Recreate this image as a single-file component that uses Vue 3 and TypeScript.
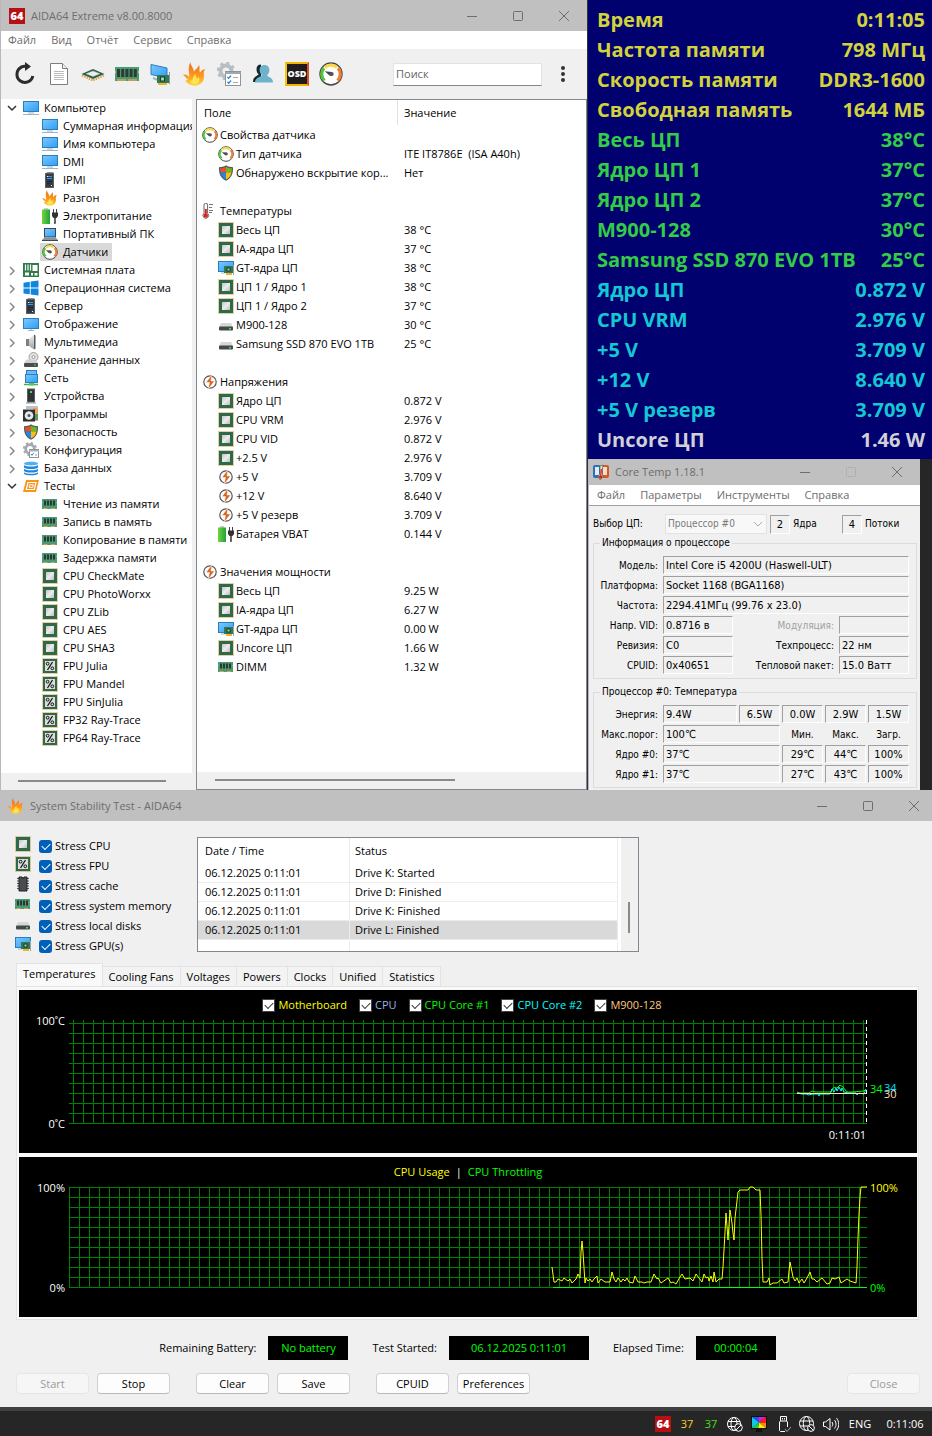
<script setup lang="ts">
import { ref } from 'vue'

interface TreeNode {
  label: string
  icon: string
  open?: boolean
  children?: { label: string; icon: string }[]
}

interface SensorRow {
  name: string
  icon?: string
  value?: string
  group?: boolean
}

const menu = ['Файл', 'Вид', 'Отчёт', 'Сервис', 'Справка']
const tools = [
  { id: 't-refresh', title: 'Обновить' },
  { id: 't-doc', title: 'Отчёт' },
  { id: 't-cpu', title: 'ЦП' },
  { id: 't-ram', title: 'Память' },
  { id: 't-gpu', title: 'Видео' },
  { id: 'i-flame', title: 'Стресс-тест' },
  { id: 't-config', title: 'Настройка' },
  { id: 't-users', title: 'Пользователи' },
  { id: '', title: 'OSD' },
  { id: 'i-gauge', title: 'Датчики' },
]

const tree = ref<TreeNode[]>([
  {
    label: 'Компьютер', icon: 'i-monitor', open: true,
    children: [
      { label: 'Суммарная информация', icon: 'i-monitor' },
      { label: 'Имя компьютера', icon: 'i-monitor' },
      { label: 'DMI', icon: 'i-monitor' },
      { label: 'IPMI', icon: 'i-server' },
      { label: 'Разгон', icon: 'i-flame' },
      { label: 'Электропитание', icon: 'i-battery' },
      { label: 'Портативный ПК', icon: 'i-laptop' },
      { label: 'Датчики', icon: 'i-gauge' },
    ],
  },
  { label: 'Системная плата', icon: 'i-board' },
  { label: 'Операционная система', icon: 'i-windows' },
  { label: 'Сервер', icon: 'i-server' },
  { label: 'Отображение', icon: 'i-display' },
  { label: 'Мультимедиа', icon: 'i-speaker' },
  { label: 'Хранение данных', icon: 'i-storage' },
  { label: 'Сеть', icon: 'i-network' },
  { label: 'Устройства', icon: 'i-device' },
  { label: 'Программы', icon: 'i-programs' },
  { label: 'Безопасность', icon: 'i-shield' },
  { label: 'Конфигурация', icon: 'i-config' },
  { label: 'База данных', icon: 'i-database' },
  {
    label: 'Тесты', icon: 'i-tests', open: true,
    children: [
      { label: 'Чтение из памяти', icon: 'i-ram' },
      { label: 'Запись в память', icon: 'i-ram' },
      { label: 'Копирование в памяти', icon: 'i-ram' },
      { label: 'Задержка памяти', icon: 'i-ram' },
      { label: 'CPU CheckMate', icon: 'i-cpu' },
      { label: 'CPU PhotoWorxx', icon: 'i-cpu' },
      { label: 'CPU ZLib', icon: 'i-cpu' },
      { label: 'CPU AES', icon: 'i-cpu' },
      { label: 'CPU SHA3', icon: 'i-cpu' },
      { label: 'FPU Julia', icon: 'i-fpu' },
      { label: 'FPU Mandel', icon: 'i-fpu' },
      { label: 'FPU SinJulia', icon: 'i-fpu' },
      { label: 'FP32 Ray-Trace', icon: 'i-fpu' },
      { label: 'FP64 Ray-Trace', icon: 'i-fpu' },
    ],
  },
])
const selected = ref('Датчики')
const search = ref('')

const sensors: SensorRow[] = [
  { name: 'Свойства датчика', icon: 'i-gauge', group: true },
  { name: 'Тип датчика', icon: 'i-gauge', value: 'ITE IT8786E\u00a0 (ISA A40h)' },
  { name: 'Обнаружено вскрытие кор...', icon: 'i-shield', value: 'Нет' },
  { name: '' },
  { name: 'Температуры', icon: 'i-thermo', group: true },
  { name: 'Весь ЦП', icon: 'i-cpu', value: '38 °C' },
  { name: 'IA-ядра ЦП', icon: 'i-cpu', value: '37 °C' },
  { name: 'GT-ядра ЦП', icon: 'i-gpu', value: '38 °C' },
  { name: 'ЦП 1 / Ядро 1', icon: 'i-cpu', value: '38 °C' },
  { name: 'ЦП 1 / Ядро 2', icon: 'i-cpu', value: '37 °C' },
  { name: 'M900-128', icon: 'i-disk', value: '30 °C' },
  { name: 'Samsung SSD 870 EVO 1TB', icon: 'i-disk', value: '25 °C' },
  { name: '' },
  { name: 'Напряжения', icon: 'i-bolt', group: true },
  { name: 'Ядро ЦП', icon: 'i-cpu', value: '0.872 V' },
  { name: 'CPU VRM', icon: 'i-cpu', value: '2.976 V' },
  { name: 'CPU VID', icon: 'i-cpu', value: '0.872 V' },
  { name: '+2.5 V', icon: 'i-cpu', value: '2.976 V' },
  { name: '+5 V', icon: 'i-bolt', value: '3.709 V' },
  { name: '+12 V', icon: 'i-bolt', value: '8.640 V' },
  { name: '+5 V резерв', icon: 'i-bolt', value: '3.709 V' },
  { name: 'Батарея VBAT', icon: 'i-battery', value: '0.144 V' },
  { name: '' },
  { name: 'Значения мощности', icon: 'i-bolt', group: true },
  { name: 'Весь ЦП', icon: 'i-cpu', value: '9.25 W' },
  { name: 'IA-ядра ЦП', icon: 'i-cpu', value: '6.27 W' },
  { name: 'GT-ядра ЦП', icon: 'i-gpu', value: '0.00 W' },
  { name: 'Uncore ЦП', icon: 'i-cpu', value: '1.66 W' },
  { name: 'DIMM', icon: 'i-ram', value: '1.32 W' },
]

const osd = [
  { k: 'Время', v: '0:11:05', c: 'gold' },
  { k: 'Частота памяти', v: '798 МГц', c: 'gold' },
  { k: 'Скорость памяти', v: 'DDR3-1600', c: 'gold' },
  { k: 'Свободная память', v: '1644 МБ', c: 'gold' },
  { k: 'Весь ЦП', v: '38°C', c: 'green' },
  { k: 'Ядро ЦП 1', v: '37°C', c: 'green' },
  { k: 'Ядро ЦП 2', v: '37°C', c: 'green' },
  { k: 'M900-128', v: '30°C', c: 'green' },
  { k: 'Samsung SSD 870 EVO 1TB', v: '25°C', c: 'green' },
  { k: 'Ядро ЦП', v: '0.872 V', c: 'cyan' },
  { k: 'CPU VRM', v: '2.976 V', c: 'cyan' },
  { k: '+5 V', v: '3.709 V', c: 'cyan' },
  { k: '+12 V', v: '8.640 V', c: 'cyan' },
  { k: '+5 V резерв', v: '3.709 V', c: 'cyan' },
  { k: 'Uncore ЦП', v: '1.46 W', c: 'silver' },
]

const coreMenu = ['Файл', 'Параметры', 'Инструменты', 'Справка']

const stress = ref([
  { label: 'Stress CPU', icon: 'i-cpu', on: true },
  { label: 'Stress FPU', icon: 'i-fpu', on: true },
  { label: 'Stress cache', icon: 'i-cache', on: true },
  { label: 'Stress system memory', icon: 'i-ram', on: true },
  { label: 'Stress local disks', icon: 'i-disk', on: true },
  { label: 'Stress GPU(s)', icon: 'i-gpu', on: true },
])

const log = [
  { t: '06.12.2025 0:11:01', s: 'Drive K: Started' },
  { t: '06.12.2025 0:11:01', s: 'Drive D: Finished' },
  { t: '06.12.2025 0:11:01', s: 'Drive K: Finished' },
  { t: '06.12.2025 0:11:01', s: 'Drive L: Finished' },
]

const tabs = ['Temperatures', 'Cooling Fans', 'Voltages', 'Powers', 'Clocks', 'Unified', 'Statistics']
const activeTab = ref('Temperatures')

const series = ref([
  { label: 'Motherboard', c: 'yellow', on: true },
  { label: 'CPU', c: 'blue', on: true },
  { label: 'CPU Core #1', c: 'lime', on: true },
  { label: 'CPU Core #2', c: 'aqua', on: true },
  { label: 'M900-128', c: 'peach', on: true },
])

const range = (from: number, to: number, step: number): number[] =>
  Array.from({ length: Math.floor((to - from) / step) + 1 }, (_, i) => from + i * step)

const tempCols = range(54, 844, 10)
const tempRows = range(9, 109, 10)
const cpuCols = range(50, 840, 10)
const cpuRows = range(6, 106, 10)

const core1 = '778,78 781,79 790,79 793,77 796,78 812,78 813,75 816,73 818,74 821,71 824,73 827,77 829,78 833,78 845,77 847,75'
const core2 = '778,79 783,80 788,80 789,81 794,80 799,80 800,82 801,80 811,80 812,78 813,75 815,78 817,74 818,77 820,73 822,77 823,74 825,78 829,79 837,79 838,81 840,79 845,80 847,75'
const usage =
  '533,86 535,101 537,101 539,98 541,99 543,100 545,97 549,100 551,98 553,102 557,98 559,93 561,97 562,71 563,60 564,71 566,102 567,97 569,100 571,98 573,101 575,98 578,95 579,102 582,98 586,101 591,101 593,91 595,98 597,101 599,97 602,101 604,98 606,100 608,97 610,101 614,102 616,95 619,101 623,101 625,102 628,101 632,101 635,93 638,98 639,97 642,102 649,97 652,102 654,101 657,103 661,96 663,93 666,98 671,97 674,100 677,93 683,101 685,93 687,97 689,96 690,100 692,95 694,101 695,91 697,101 700,98 703,98 704,86 705,69 706,51 707,32 709,59 711,29 713,42 714,52 715,59 716,37 718,20 719,11 721,9 729,9 731,6 734,6 737,9 741,9 742,34 743,77 744,101 748,101 750,97 751,104 754,102 758,102 763,98 765,102 769,101 770,90 771,81 773,91 774,96 776,100 778,97 780,102 783,98 785,102 788,97 791,91 793,98 795,98 798,101 803,97 808,103 811,102 813,97 816,98 820,96 822,102 828,98 831,100 837,102 838,86 839,57 840,33 841,16 842,6 848,6'
</script>

<template>
  <svg class="defs" width="0" height="0" aria-hidden="true">
    <defs>
      <linearGradient id="g-scr" x1="0" y1="0" x2="1" y2="1"><stop offset="0" stop-color="#7cc8ff" /><stop offset="1" stop-color="#2f9df4" /></linearGradient>
      <linearGradient id="g-fire" x1="0" y1="0" x2="0" y2="1"><stop offset="0" stop-color="#f26a1b" /><stop offset=".6" stop-color="#fb9a1e" /><stop offset="1" stop-color="#ffd83a" /></linearGradient>
      <linearGradient id="g-bat" x1="0" y1="0" x2="1" y2="0"><stop offset="0" stop-color="#6fd63c" /><stop offset="1" stop-color="#23a23a" /></linearGradient>
      <linearGradient id="g-metal" x1="0" y1="0" x2="1" y2="1"><stop offset="0" stop-color="#c4c4c4" /><stop offset=".5" stop-color="#ececec" /><stop offset="1" stop-color="#bdbdbd" /></linearGradient>
      <linearGradient id="g-gray" x1="0" y1="0" x2="0" y2="1"><stop offset="0" stop-color="#f2f2f2" /><stop offset="1" stop-color="#a0a0a0" /></linearGradient>
    </defs>

    <symbol id="i-monitor" viewBox="0 0 16 16">
      <rect x=".5" y="1.500" width="15" height="10" fill="url(#g-scr)" stroke="#2b7fb8" />
      <path d="M5 13h6M0 14.500h16" stroke="#9fb4c4" /><path d="M6 12h4v1H6z" fill="#c8d4dc" />
    </symbol>
    <symbol id="i-display" viewBox="0 0 16 16">
      <rect x=".5" y="2.500" width="15" height="10" fill="url(#g-scr)" stroke="#2b7fb8" />
      <path d="M5 14.500h6" stroke="#9fb4c4" /><path d="M7 13h2v1H7z" fill="#c8d4dc" />
    </symbol>
    <symbol id="i-server" viewBox="0 0 16 16">
      <path d="M4 1.500 5 0h6l1 1.500z" fill="#8b8f94" /><rect x="3.500" y="1.500" width="8" height="14" fill="#353a40" stroke="#5b6066" />
      <path d="M5 4.500h5M5 6.500h5" stroke="#2f9df4" /><path d="M5 4h1v1H5zM9 13h1v1H9z" fill="#e6f4ff" /><path d="M5 9.500h5M5 11.500h3" stroke="#22262a" />
    </symbol>
    <symbol id="i-flame" viewBox="0 0 16 16">
      <path d="M5 0c-.3 2.300 2.500 4 2.200 6.500C8 5 10 4 10.800 2c.6 2.200-.2 3.600.5 5 .8-.6 1.200-2.500 3.700-2-1.600 1-1 2.800-1 4.500 0 4-2.500 6-6 6.300C5 15.600 2.500 14.500 1.500 12c1 .4 1.600.3 2 0C2 11 1 9 0 8.500c1.800-.6 3.200.2 4 1.500C4.800 7 2.500 5 5 0z" fill="url(#g-fire)" />
      <path d="M8.500 8c-.3 2 .9 2.200.8 3.300.7-.3 1-1 1.200-1.700.9 2.600.2 5-2.500 5.200-2 .1-3.300-1.200-3.200-2.600.6.3 1 .2 1.400 0C6.500 10.500 7 9 8.500 8z" fill="#ffe352" />
    </symbol>
    <symbol id="i-battery" viewBox="0 0 16 16">
      <rect x="2" y="0" width="4" height="2" fill="#c8d0c8" /><rect x="0" y="1.500" width="8" height="14.500" fill="url(#g-bat)" />
      <path d="M11.500 1v4M14.500 1v4" stroke="#444" /><path d="M10 4.500h6V8l-1.500 2h-3L10 8z" fill="#333" /><path d="M13 9.500V15h-1" stroke="#333" stroke-width="1.500" fill="none" />
    </symbol>
    <symbol id="i-laptop" viewBox="0 0 16 16">
      <rect x="2.500" y="2.500" width="11" height="8.500" fill="url(#g-scr)" stroke="#3c4750" /><path d="M2.500 11.500h11L16 14H0z" fill="#8a959d" /><path d="M0 14h16v1H0z" fill="#3c4750" />
    </symbol>
    <symbol id="i-gauge" viewBox="0 0 16 16">
      <circle cx="8" cy="8" r="7.300" fill="#fff" stroke="#4a4a4a" />
      <path d="M3.600 12.400A6.100 6.100 0 0 1 3.300 4.100" fill="none" stroke="#55c63c" stroke-width="2.200" />
      <path d="M3.900 3.600A6 6 0 0 1 12 3.600" fill="none" stroke="#f7d94c" stroke-width="2.200" />
      <path d="M12.700 4.100a6.100 6.100 0 0 1-.3 8.300" fill="none" stroke="#ee7f3a" stroke-width="2.200" />
      <path d="M3.800 6.200 8.600 6.600 9.400 8.800 7.200 9.200z" fill="#444" /><circle cx="8.400" cy="8" r="1.400" fill="#555" />
    </symbol>
    <symbol id="i-board" viewBox="0 0 16 16">
      <rect x="0" y="1" width="16" height="14" fill="#2f7a48" />
      <path d="M2.500 2.500v6M5 2.500v6M7.500 2.500v6" stroke="#fff" stroke-width="1.200" /><rect x="9.500" y="3" width="5" height="6" fill="#fff" /><path d="M2 10.500h4v3H2zM8 11h2v2.500H8zM11.500 11h3v2.500h-3z" fill="#fff" />
    </symbol>
    <symbol id="i-windows" viewBox="0 0 16 16">
      <path d="M.5 2.700 6.800 1.800V7.600H.5zM7.700 1.600 15.500.5v7.100H7.700zM.5 8.500h6.300v5.800L.5 13.400zM7.700 8.500h7.800v7.100l-7.800-1.100z" fill="#0f86dd" />
    </symbol>
    <symbol id="i-speaker" viewBox="0 0 16 16">
      <path d="M3 5h3v7H3z" fill="#7b8087" /><path d="M6 5 11 .5v15L6 12z" fill="url(#g-gray)" /><path d="M11 .5 12.500 1.500v13L11 15.500z" fill="#555b61" />
    </symbol>
    <symbol id="i-storage" viewBox="0 0 16 16">
      <circle cx="10.500" cy="5" r="4.500" fill="#e3e3e3" stroke="#a2a2a2" /><circle cx="10.500" cy="5" r="1.500" fill="#fff" stroke="#999" />
      <path d="M3.500 7.500h9L15 11H1z" fill="#d2d2d2" /><rect x="1" y="11" width="14" height="4" rx="1" fill="#4a4d50" /><path d="M11 12.500h2v1h-2z" fill="#43e043" />
    </symbol>
    <symbol id="i-network" viewBox="0 0 16 16">
      <rect x="3.500" y=".5" width="10" height="7" fill="#6bbcf5" stroke="#2b7fb8" /><rect x="2.500" y="4.500" width="12" height="8" fill="url(#g-scr)" stroke="#2b7fb8" />
      <path d="M1 14.500h14" stroke="#46b04a" stroke-width="1.500" /><path d="M6 13h5v2.500H6z" fill="#55c559" />
    </symbol>
    <symbol id="i-device" viewBox="0 0 16 16">
      <rect x="4.500" y="1" width="7" height="13" fill="#303336" stroke="#5a5d60" /><path d="M7 3h2v2H7z" fill="#48e048" /><path d="M3 15h10" stroke="#909396" />
    </symbol>
    <symbol id="i-programs" viewBox="0 0 16 16">
      <path d="M3 0h12v3H3z" fill="#b9c3c9" /><path d="M10 2h5v13h-5z" fill="#e9a15b" /><path d="M12 8h3v6h-3z" fill="#4e9c6b" />
      <rect x="0" y="3.500" width="12" height="12" fill="#2d2f31" /><circle cx="6" cy="9.500" r="4.300" fill="#e2e8ec" /><circle cx="6" cy="9.500" r="1.500" fill="#555" />
    </symbol>
    <symbol id="i-shield" viewBox="0 0 16 16">
      <path d="M8 .3C6 1.800 3.500 2.200 1 2.200c-.3 6.500 1.500 11 7 13.500 5.500-2.500 7.300-7 7-13.500C12.500 2.200 10 1.800 8 .3z" fill="#565b60" />
      <path d="M8 1.700C6.300 2.800 4.300 3.200 2.100 3.300c0 1.500.1 3 .4 4.300H8z" fill="#e8502c" /><path d="M8 1.700c1.700 1.100 3.700 1.500 5.900 1.600 0 1.500-.1 3-.4 4.300H8z" fill="#6cba1c" />
      <path d="M2.500 7.600H8v6.900c-3-1.400-4.800-3.600-5.500-6.900z" fill="#2387e0" /><path d="M13.500 7.600H8v6.900c3-1.400 4.800-3.600 5.500-6.900z" fill="#f9bd15" />
    </symbol>
    <symbol id="i-config" viewBox="0 0 16 16">
      <circle cx="7" cy="7" r="4.300" fill="none" stroke="#a3a9ae" stroke-width="2.800" /><circle cx="7" cy="7" r="6.200" fill="none" stroke="#a3a9ae" stroke-width="1.800" stroke-dasharray="2.400 2.460" />
      <rect x="6.500" y="7.500" width="9" height="8" fill="#fff" stroke="#8d949a" /><path d="M6 8h10v1.500H6z" fill="#aab1b7" /><path d="m8 12 1 1.300 1.800-2.500" fill="none" stroke="#2a86d6" /><path d="M12 13h2" stroke="#999" />
    </symbol>
    <symbol id="i-database" viewBox="0 0 16 16">
      <path d="M1 3.500C1 1 15 1 15 3.500S1 6 1 3.500z" fill="#4eb0f2" /><path d="M1 5c2.500 2 11.500 2 14 0v2.500c-2 2-12 2-14 0zM1 8.800c2.500 2 11.500 2 14 0v2.200c-2 2-12 2-14 0zM1 12.300c2.500 2 11.500 2 14 0v1.500c-2 2-12 2-14 0z" fill="#1f86dc" />
    </symbol>
    <symbol id="i-tests" viewBox="0 0 16 16">
      <path d="M3 2h13l-3 12H0z" fill="#f7941d" /><path d="M5 4.500h8L11.300 11.500H3.200z" fill="none" stroke="#fff" stroke-width="1.200" /><path d="M6.700 6.700h3.600L9.700 9.300H6z" fill="none" stroke="#fff" />
    </symbol>
    <symbol id="i-ram" viewBox="0 0 16 16">
      <path d="M0 3h15v3l-.5.500.5.500v6H0V7l.5-.5L0 6z" fill="#4a9a72" /><path d="M2 4.500h2v5H2zM5 4.500h2v5H5zM8 4.500h2v5H8zM11 4.500h2v5h-2z" fill="#2c3734" /><path d="M1.500 12.500h4M9 12.500h4" stroke="#e5a04c" />
    </symbol>
    <symbol id="i-cpu" viewBox="0 0 16 16">
      <rect x=".5" y=".5" width="15" height="15" fill="none" stroke="#c8a040" stroke-dasharray="1 1" /><rect x="1" y="1" width="14" height="14" fill="#2f694c" /><rect x="4" y="4" width="8" height="8" fill="url(#g-metal)" />
    </symbol>
    <symbol id="i-fpu" viewBox="0 0 16 16">
      <rect x=".5" y=".5" width="15" height="15" fill="none" stroke="#c8a040" stroke-dasharray="1 1" /><rect x="1" y="1" width="14" height="14" fill="#2f694c" /><rect x="3" y="3" width="10" height="10" fill="#dcdcdc" />
      <circle cx="5.600" cy="5.700" r="1.400" fill="none" stroke="#111" /><circle cx="10.300" cy="10.300" r="1.400" fill="none" stroke="#111" /><path d="M10.500 4 5.500 12" stroke="#111" stroke-width="1.200" />
    </symbol>
    <symbol id="i-gpu" viewBox="0 0 16 16">
      <rect x=".5" y="1.500" width="15" height="10" fill="url(#g-scr)" stroke="#2b7fb8" /><path d="M3 13h4" stroke="#9fb4c4" />
      <rect x="6" y="6" width="10" height="7" fill="#2f7a55" /><rect x="8.500" y="7.500" width="4" height="4" fill="#183c2c" /><rect x="9.500" y="8.500" width="2" height="2" fill="#9fd6b5" /><path d="M8 13h6v2H8z" fill="#f2b22c" /><path d="M15.500 5v10" stroke="#9aa4aa" />
    </symbol>
    <symbol id="i-disk" viewBox="0 0 16 16">
      <path d="M3 6h10l2 4H1z" fill="#d7d7d7" /><rect x="1" y="9.500" width="14" height="4" rx="1" fill="#45484b" /><path d="M11 11h2v1.500h-2z" fill="#43e043" />
    </symbol>
    <symbol id="i-thermo" viewBox="0 0 16 16">
      <path d="M2 2a1.800 1.800 0 0 1 3.600 0v8.300a2.800 2.800 0 1 1-3.600 0z" fill="#fff" stroke="#666" /><path d="M3.800 6v6" stroke="#e02020" stroke-width="2" /><circle cx="3.800" cy="12.600" r="2.200" fill="#e02020" /><path d="M7 1.500h4M7 4.500h3M7 7.500h4M7 9.500h3" stroke="#777" />
    </symbol>
    <symbol id="i-bolt" viewBox="0 0 16 16">
      <circle cx="8" cy="8" r="6.200" fill="#fff" stroke="#555" stroke-width="1.200" /><path d="M10 .5 4 8.500h3.500L6 15.500l6.500-8.500H9z" fill="#d9661f" stroke="#fff" stroke-width=".5" />
    </symbol>
    <symbol id="i-cache" viewBox="0 0 16 16">
      <path d="M2 2.500h12M2 5h12M2 7.500h12M2 10h12M2 12.500h12" stroke="#555" /><path d="M4 1h3l1 1.500L9 1h3v14H4z" fill="#4a4d50" stroke="#222" />
    </symbol>
    <symbol id="i-coretemp" viewBox="0 0 16 16">
      <rect x="0" y="1" width="8" height="13" rx="2" fill="#2f6fb4" /><rect x="8" y="1" width="8" height="13" rx="2" fill="#d05a28" /><path d="M2 3h4v8H2z" fill="#e4edf6" /><path d="M10 3h4v8h-4z" fill="#f6ddc8" />
      <path d="M7 2 10 1 9 9 10 13 7 16 5 13 7 9z" fill="#d8e4cc" stroke="#4a5a4a" stroke-width=".6" /><circle cx="7.500" cy="13" r="1.800" fill="#e02020" /><path d="M8.300 5 7.600 13" stroke="#e02020" stroke-width="1.200" />
    </symbol>

    <symbol id="t-refresh" viewBox="0 0 24 24">
      <path d="M8.500 5.200A8 8 0 1 0 19.800 14" fill="none" stroke="#2b2b2b" stroke-width="3" /><path d="M8 5.200C10.500 4 13 4 15 5" fill="none" stroke="#2b2b2b" stroke-width="3" /><path d="M12 0 18 4.500 12 9z" fill="#2b2b2b" />
    </symbol>
    <symbol id="t-doc" viewBox="0 0 24 24">
      <path d="M3.500 1.500h12l5 5v16h-17z" fill="#fff" stroke="#7d7d7d" /><path d="M15.500 1.500v5h5" fill="#eee" stroke="#7d7d7d" /><path d="M7 9.500h10M7 11.500h10M7 13.500h10M7 15.500h10M7 17.500h10" stroke="#bcbcbc" />
    </symbol>
    <symbol id="t-cpu" viewBox="0 0 24 24">
      <path d="M1 13.500 12 18.500 23 13.500" fill="none" stroke="#e0a436" stroke-width="2" stroke-dasharray="1.500 1" /><path d="M.5 12 12 7l11.500 5L12 17z" fill="#2f5f48" /><path d="M5 11.800 12 9l7 2.800L12 14.500z" fill="#eee" stroke="#bbb" stroke-width=".5" />
    </symbol>
    <symbol id="t-ram" viewBox="0 0 24 24">
      <path d="M0 5h24v4l-1 1 1 1v8H0v-8l1-1-1-1z" fill="#4a9a72" /><path d="M2 7h3v8H2zM6.200 7h3v8h-3zM10.400 7h3v8h-3zM14.600 7h3v8h-3zM18.800 7h3v8h-3z" fill="#2f3936" /><path d="M2 18h9M13 18h9" stroke="#e8a04c" stroke-width="1.500" />
    </symbol>
    <symbol id="t-gpu" viewBox="0 0 24 24">
      <path d="M2 2.500 18 6v10L2 12.500z" fill="url(#g-scr)" stroke="#2b7fb8" /><path d="m4 16 5 2" stroke="#9fb4c4" stroke-width="2" /><rect x="8" y="13" width="12" height="8" fill="#2f7a55" /><rect x="11" y="14.500" width="5" height="5" fill="#183c2c" /><rect x="12" y="15.500" width="3" height="3" fill="#9fd6b5" /><path d="M9 21h9v2H9z" fill="#f2b22c" /><path d="M20.500 10v12" stroke="#8f999f" />
    </symbol>
    <symbol id="t-config" viewBox="0 0 24 24">
      <circle cx="9" cy="9" r="5.500" fill="none" stroke="#b9bec2" stroke-width="4" /><circle cx="9" cy="9" r="8" fill="none" stroke="#b9bec2" stroke-width="2.500" stroke-dasharray="3.140 3.140" />
      <rect x="8.500" y="9.500" width="15" height="14" fill="#fff" stroke="#8d949a" /><path d="M8 10h16v2H8z" fill="#9fa6ac" /><path d="m10.500 15 1.200 1.300 2.300-2.800M10.500 20l1.200 1.300 2.300-2.800" fill="none" stroke="#2a86d6" stroke-width="1.300" /><path d="M16 15.500h5M16 20.500h5" stroke="#aaa" />
    </symbol>
    <symbol id="t-users" viewBox="0 0 24 24">
      <path d="M10 2.500c-3 0-4.500 2-4.500 4.700 0 2.300 1 4.300 2.300 5.300C5 14.500 2 15 2 20h8z" fill="#11272f" /><path d="M13.500 3c3.300 0 4.900 2.300 4.900 5 0 2.300-1 4.200-2.400 5.200 1.500 2.300 6 2 6 7.300H4c0-5.500 5.500-5 7-7.300-1.400-1-2.400-3-2.400-5.200 0-2.700 1.600-5 4.900-5z" fill="#6fb2cc" />
    </symbol>

    <symbol id="w-min" viewBox="0 0 12 12"><path d="M1 6.500h10" stroke="currentColor" /></symbol>
    <symbol id="w-max" viewBox="0 0 12 12"><rect x="1.500" y="1.500" width="9" height="9" rx="1" fill="none" stroke="currentColor" /></symbol>
    <symbol id="w-close" viewBox="0 0 12 12"><path d="m1 1 10 10M11 1 1 11" stroke="currentColor" /></symbol>
  </svg>

  <main class="desktop">
    <div class="upper">
      <section class="win aida">
        <header class="titlebar">
          <span class="badge">64</span>
          <h1>AIDA64 Extreme v8.00.8000</h1>
          <div class="winbtns">
            <button aria-label="Свернуть"><svg><use href="#w-min" /></svg></button>
            <button aria-label="Развернуть"><svg><use href="#w-max" /></svg></button>
            <button aria-label="Закрыть"><svg><use href="#w-close" /></svg></button>
          </div>
        </header>
        <nav class="menu"><button v-for="m in menu" :key="m">{{ m }}</button></nav>
        <div class="toolbar">
          <button v-for="t in tools" :key="t.title" :aria-label="t.title">
            <svg v-if="t.id"><use :href="'#' + t.id" /></svg>
            <span v-else class="osd-icon">OSD</span>
          </button>
          <input v-model="search" type="text" placeholder="Поиск" aria-label="Поиск" />
          <button class="more" aria-label="Ещё"><svg viewBox="0 0 24 24"><circle cx="11" cy="6" r="2" /><circle cx="11" cy="12" r="2" /><circle cx="11" cy="18" r="2" /></svg></button>
        </div>
        <div class="panes">
          <div class="tree">
            <ul>
              <li v-for="n in tree" :key="n.label">
                <div class="node">
                  <button class="chev" :class="{ open: n.open }" :aria-label="n.label" @click="n.open = !n.open">
                    <svg viewBox="0 0 14 14"><path v-if="n.open" d="m3 5 4 4 4-4" /><path v-else d="m5 4 4 4-4 4" /></svg>
                  </button>
                  <svg class="ic"><use :href="'#' + n.icon" /></svg>
                  <span>{{ n.label }}</span>
                </div>
                <ul v-if="n.children && n.open">
                  <li v-for="c in n.children" :key="c.label">
                    <button class="leaf" :class="{ sel: selected === c.label }" @click="selected = c.label">
                      <svg class="ic"><use :href="'#' + c.icon" /></svg><span>{{ c.label }}</span>
                    </button>
                  </li>
                </ul>
              </li>
            </ul>
            <div class="hscroll"><i class="thumb-tree"></i></div>
          </div>
          <div class="list">
            <table>
              <colgroup><col class="c-name" /><col /></colgroup>
              <thead><tr><th>Поле</th><th>Значение</th></tr></thead>
              <tbody>
                <tr v-for="(s, i) in sensors" :key="i">
                  <td>
                    <div v-if="s.name" class="cell" :class="{ group: s.group }">
                      <svg class="ic"><use :href="'#' + s.icon" /></svg><span>{{ s.name }}</span>
                    </div>
                  </td>
                  <td>{{ s.value }}</td>
                </tr>
              </tbody>
            </table>
            <div class="hscroll"><i class="thumb-list"></i></div>
          </div>
        </div>
      </section>

      <div class="side">
        <section class="osd">
          <div v-for="(o, i) in osd" :key="i" :class="o.c"><span>{{ o.k }}</span><span>{{ o.v }}</span></div>
        </section>

        <section class="core">
          <header class="titlebar">
            <svg class="ic"><use href="#i-coretemp" /></svg>
            <h2>Core Temp 1.18.1</h2>
            <div class="winbtns">
              <button aria-label="Свернуть"><svg><use href="#w-min" /></svg></button>
              <button aria-label="Развернуть" disabled><svg><use href="#w-max" /></svg></button>
              <button aria-label="Закрыть"><svg><use href="#w-close" /></svg></button>
            </div>
          </header>
          <nav class="menu"><button v-for="m in coreMenu" :key="m">{{ m }}</button></nav>
          <div class="core-body">
            <div class="pick">
              <label for="cpu">Выбор ЦП:</label>
              <div class="combo">
                <select id="cpu" disabled><option>Процессор #0</option></select>
                <svg viewBox="0 0 10 10"><path d="m1 3 4 4 4-4" /></svg>
              </div>
              <output class="f num">2</output><span class="cores">Ядра</span>
              <output class="f num">4</output><span>Потоки</span>
            </div>
            <fieldset>
              <legend>Информация о процессоре</legend>
              <div class="info">
                <span>Модель:</span><output class="f wide">Intel Core i5 4200U (Haswell-ULT)</output>
                <span>Платформа:</span><output class="f wide">Socket 1168 (BGA1168)</output>
                <span>Частота:</span><output class="f wide">2294.41МГц (99.76 x 23.0)</output>
                <span>Напр. VID:</span><output class="f">0.8716 в</output><span class="off">Модуляция:</span><output class="f"></output>
                <span>Ревизия:</span><output class="f">C0</output><span>Техпроцесс:</span><output class="f">22 нм</output>
                <span>CPUID:</span><output class="f">0x40651</output><span>Тепловой пакет:</span><output class="f">15.0 Ватт</output>
              </div>
            </fieldset>
            <fieldset class="second">
              <legend>Процессор #0: Температура</legend>
              <div class="temps">
                <span>Энергия:</span><output class="f">9.4W</output><output class="f mid">6.5W</output><output class="f mid">0.0W</output><output class="f mid">2.9W</output><output class="f mid">1.5W</output>
                <span>Макс.порог:</span><output class="f two">100℃</output><b>Мин.</b><b>Макс.</b><b>Загр.</b>
                <span>Ядро #0:</span><output class="f two">37℃</output><output class="f mid">29℃</output><output class="f mid">44℃</output><output class="f mid">100%</output>
                <span>Ядро #1:</span><output class="f two">37℃</output><output class="f mid">27℃</output><output class="f mid">43℃</output><output class="f mid">100%</output>
              </div>
            </fieldset>
          </div>
        </section>
      </div>
    </div>

    <section class="sst">
      <header class="titlebar">
        <svg class="ic"><use href="#i-flame" /></svg>
        <h2>System Stability Test - AIDA64</h2>
        <div class="winbtns">
          <button aria-label="Minimize"><svg><use href="#w-min" /></svg></button>
          <button aria-label="Maximize"><svg><use href="#w-max" /></svg></button>
          <button aria-label="Close window"><svg><use href="#w-close" /></svg></button>
        </div>
      </header>

      <div class="sst-top">
        <div class="stress">
          <div v-for="s in stress" :key="s.label">
            <svg class="ic"><use :href="'#' + s.icon" /></svg>
            <label><input v-model="s.on" type="checkbox" />{{ s.label }}</label>
          </div>
        </div>
        <div class="log">
          <table>
            <colgroup><col class="c-date" /><col /></colgroup>
            <thead><tr><th>Date / Time</th><th>Status</th></tr></thead>
            <tbody>
              <tr v-for="(l, i) in log" :key="i" :class="{ sel: i === log.length - 1 }"><td>{{ l.t }}</td><td>{{ l.s }}</td></tr>
              <tr class="rest"><td></td><td></td></tr>
            </tbody>
          </table>
          <div class="vscroll"><i></i></div>
        </div>
      </div>

      <div class="tabs" role="tablist">
        <button v-for="t in tabs" :key="t" role="tab" :aria-selected="activeTab === t" :class="{ on: activeTab === t }" @click="activeTab = t">{{ t }}</button>
      </div>
      <div class="panel">
        <div class="chart">
          <div class="legend">
            <label v-for="s in series" :key="s.label" :class="s.c"><input v-model="s.on" type="checkbox" />{{ s.label }}</label>
          </div>
          <svg viewBox="0 0 898 139">
            <g class="grid" shape-rendering="crispEdges">
              <path v-for="x in tempCols" :key="'x' + x" :d="`M${x + 0.5} 6V110`" />
              <path v-for="y in tempRows" :key="'y' + y" :d="`M50 ${y + 0.5}H848`" />
            </g>
            <path class="now" d="M847.500 6V110" />
            <polyline class="l-lime" :points="core1" />
            <polyline class="l-aqua" :points="core2" />
            <path class="l-peach" d="M778 79.500H847" />
            <g class="w" text-anchor="end"><text x="46" y="11">100˚C</text><text x="46" y="114">0˚C</text><text x="847" y="125">0:11:01</text></g>
            <text class="t-lime" x="851" y="79">34</text><text class="t-aqua" x="865" y="78">34</text><text class="t-peach" x="865" y="84">30</text>
          </svg>
        </div>
        <div class="chart">
          <div class="legend bar"><span class="yellow">CPU Usage</span><span class="white">|</span><span class="lime">CPU Throttling</span></div>
          <svg viewBox="0 0 898 136">
            <g class="grid" shape-rendering="crispEdges">
              <path v-for="x in cpuCols" :key="'x' + x" :d="`M${x + 0.5} 6V107`" />
              <path v-for="y in cpuRows" :key="'y' + y" :d="`M50 ${y + 0.5}H848`" />
            </g>
            <path class="l-lime" d="M534 106.500H848" />
            <polyline class="l-yellow" :points="usage" />
            <g class="w" text-anchor="end"><text x="46" y="11">100%</text><text x="46" y="111">0%</text></g>
            <text class="t-yellow" x="851" y="11">100%</text><text class="t-lime" x="851" y="111">0%</text>
          </svg>
        </div>
      </div>

      <div class="status">
        <span>Remaining Battery:</span><output class="short">No battery</output>
        <span>Test Started:</span><output class="long">06.12.2025 0:11:01</output>
        <span>Elapsed Time:</span><output class="short">00:00:04</output>
      </div>
      <div class="actions">
        <div><button disabled>Start</button><button>Stop</button></div>
        <div><button>Clear</button><button>Save</button></div>
        <div><button>CPUID</button><button>Preferences</button></div>
        <div class="right"><button disabled>Close</button></div>
      </div>
    </section>

    <footer class="taskbar">
      <span class="badge">64</span>
      <span class="n1">37</span><span class="n2">37</span>
      <svg class="ic" viewBox="0 0 16 16"><g fill="none" stroke="#fff"><circle cx="7" cy="8" r="6.500" /><ellipse cx="7" cy="8" rx="3" ry="6.500" /><path d="M1 5.500h12M1 10.500h7" /></g><circle cx="11.500" cy="11.500" r="3.800" fill="#262626" stroke="#fff" /><path d="m9 14 5-5" stroke="#fff" /></svg>
      <svg class="ic" viewBox="0 0 16 16"><path d="M5 13h6v3H5z" fill="#111" /><path d="M0 0h16v13H0z" fill="#111" /><path d="M1 1h7v5.500z" fill="#2a4cff" /><path d="M8 1h7L8 6.500z" fill="#d31fd6" /><path d="M15 1v6L8 6.500z" fill="#ff1c1c" /><path d="M15 7v5l-7-5.500z" fill="#ff8a00" /><path d="M15 12H7l1-5.500z" fill="#ffe81a" /><path d="M7 12H1l7-5.500z" fill="#1fd43a" /><path d="M1 12V1l7 5.500z" fill="#12c8e8" /></svg>
      <svg class="ic" viewBox="0 0 16 16"><g fill="none" stroke="#fff"><path d="M5.500 5V.5h6V5" /><path d="M10 15.500H5.500l-1-1V6l1-1h6l1 1v5" /><path d="M7.500 2v1.500M9.500 2v1.500" /></g><path d="m10 13 2 2.500 4-4.500" fill="none" stroke="#aaa" /></svg>
      <svg class="ic" viewBox="0 0 16 16"><g fill="none" stroke="#fff"><circle cx="7.500" cy="7.500" r="7" /><ellipse cx="7.500" cy="7.500" rx="3.200" ry="7" /><path d="M1 5h13M1 10h8" /></g><circle cx="12" cy="12" r="3.400" fill="#262626" stroke="#fff" /><path d="m9.500 9.500 5 5" stroke="#fff" /></svg>
      <svg class="ic" viewBox="0 0 16 16"><g fill="none" stroke="#fff"><path d="M.5 6v4.500h2L7 14V2.500L2.500 6z" /><path d="M9 6c1 1.500 1 3 0 4.500M11.500 4c2 2.500 2 6 0 8.500M13.500 2c3 4 3 8.500 0 12.500" /></g></svg>
      <span class="lang">ENG</span>
      <span class="time">0:11:06</span>
    </footer>
  </main>
</template>

<style>
body {
  background: #262626;
}
</style>

<style scoped>
.defs {
  position: absolute;
}
.desktop {
  font: 11px/18px 'Open Sans', 'Noto Sans', sans-serif;
  color: #000;
  background: #262626;
}
.desktop * {
  box-sizing: border-box;
}
button,
input,
select {
  font: inherit;
  color: inherit;
}
button {
  border: 0;
  padding: 0;
  background: none;
}
ul {
  list-style: none;
  margin: 0;
  padding: 0;
}
.ic {
  width: 16px;
  height: 16px;
  flex: none;
}
.badge {
  flex: none;
  width: 16px;
  height: 16px;
  background: #b80f14;
  color: #fff;
  font-size: 11px;
  font-weight: 800;
  line-height: 16px;
  text-align: center;
}
.upper {
  display: grid;
  grid-template-columns: 588fr 344fr;
}

/* window chrome */
.titlebar {
  display: flex;
  align-items: center;
  height: 31px;
  padding: 0 9px 0 8px;
  background: #c0c0c0;
  color: #6d6d6d;
}
.titlebar h1,
.titlebar h2 {
  flex: 1;
  margin: 0 0 0 6px;
  font: inherit;
}
.winbtns {
  display: flex;
  gap: 18px;
}
.winbtns button {
  display: grid;
  place-items: center;
  width: 28px;
  height: 20px;
}
.winbtns button:disabled {
  color: #b0b0b0;
}
.winbtns svg {
  width: 12px;
  height: 12px;
}
.menu {
  display: flex;
  gap: 15px;
  padding: 0 7px;
  background: #fff;
  color: #6d6d6d;
}

/* AIDA64 main window */
.aida {
  display: flex;
  flex-direction: column;
  min-width: 0;
  border-left: 1px solid #b8b8b8;
  border-right: 1px solid #303040;
  background: #f0f0f0;
}
.toolbar {
  display: flex;
  align-items: center;
  gap: 10px;
  height: 50px;
  padding: 0 11px 0 12px;
}
.toolbar button,
.toolbar button svg {
  display: block;
  width: 24px;
  height: 24px;
}
.osd-icon {
  display: block;
  height: 24px;
  border: 2px solid;
  border-color: #f0b400 #d8502a #f0b400 #ffc400;
  background: #1f1b1c;
  color: #fff;
  font-size: 9px;
  font-weight: 800;
  line-height: 20px;
  text-align: center;
}
.toolbar input {
  flex: 0 1 149px;
  min-width: 60px;
  height: 23px;
  margin-left: auto;
  padding: 0 2px 2px;
  border: 1px solid #e3e3e3;
  border-bottom-color: #868686;
  background: #fff;
  outline: 0;
}
.toolbar input::placeholder {
  color: #666;
  opacity: 1;
}
.toolbar .more svg {
  fill: #333;
}
.panes {
  flex: 1;
  display: flex;
  gap: 4px;
}
.tree {
  flex: 0 0 191px;
  display: flex;
  flex-direction: column;
  justify-content: space-between;
  overflow: hidden;
  white-space: nowrap;
  background: #fff;
}
.node {
  display: flex;
  align-items: center;
  height: 18px;
  padding-left: 4px;
}
.node .ic {
  margin: 0 5px 0 4px;
}
.chev,
.chev svg {
  display: block;
  width: 14px;
  height: 14px;
}
.chev path {
  fill: none;
  stroke: #8a8a8a;
  stroke-width: 1.5;
}
.chev.open path {
  stroke: #333;
}
.leaf {
  display: flex;
  align-items: center;
  gap: 5px;
  height: 18px;
  margin-left: 39px;
  padding: 0 4px 0 2px;
}
.leaf.sel {
  background: #d9d9d9;
}
.hscroll {
  flex: none;
  height: 17px;
  padding: 7px 26px 0 17px;
  background: #f0f0f0;
}
.hscroll i {
  display: block;
  height: 2px;
  background: #8a8a8a;
}
.list {
  flex: 1;
  min-width: 0;
  display: flex;
  flex-direction: column;
  justify-content: space-between;
  border: 1px solid #828790;
  background: #fff;
}
.list .hscroll {
  padding-left: 18px;
}
.list .thumb-list {
  width: 240px;
}
table {
  width: 100%;
  table-layout: fixed;
  border-collapse: separate;
  border-spacing: 0;
}
.c-name {
  width: 200px;
}
th,
td {
  padding: 0 0 0 6px;
  font-weight: 400;
  text-align: left;
  white-space: nowrap;
}
.list th {
  height: 25px;
  padding-left: 7px;
}
.list th + th {
  padding-left: 6px;
  border-left: 1px solid #e3e3e3;
}
.list td {
  height: 19px;
}
.list td + td {
  padding-left: 7px;
}
.cell {
  display: flex;
  align-items: center;
  gap: 2px;
  margin-left: 15px;
}
.cell.group {
  margin-left: -1px;
}

/* on-screen display */
.side {
  min-width: 0;
  display: flex;
  flex-direction: column;
}
.osd {
  padding: 5px 7px 4px 9px;
  background: #00006e;
  font-size: 20px;
  font-weight: 700;
  line-height: 30px;
}
.osd div {
  display: flex;
  justify-content: space-between;
  white-space: nowrap;
}
.gold {
  color: #d2d23c;
}
.green {
  color: #32cd46;
}
.cyan {
  color: #14c8d2;
}
.silver {
  color: #d0d0d8;
}

/* Core Temp */
.core {
  flex: 1;
  margin: 0 12px 0 0;
  border-left: 1px solid #b8b8b8;
  background: #f0f0f0;
}
.core .titlebar {
  height: 26px;
  padding-left: 4px;
}
.core .menu {
  height: 21px;
  padding-left: 8px;
  border-bottom: 1px solid #a0a0a0;
}
.core-body {
  padding: 8px 3px 2px 4px;
  font: 10px/14px 'DejaVu Sans Condensed', 'DejaVu Sans', sans-serif;
  white-space: nowrap;
}
.pick {
  display: flex;
  align-items: center;
  height: 20px;
}
.pick label {
  flex: 0 0 72px;
}
.combo {
  display: flex;
  align-items: center;
  width: 102px;
  height: 20px;
  margin-right: 3px;
  border: 1px solid #e3e3e3;
  background: #f8f8f8;
}
.combo select {
  flex: 1;
  appearance: none;
  border: 0;
  padding: 0 2px;
  background: none;
  color: #7a7a7a;
  opacity: 1;
}
.combo svg {
  width: 10px;
  height: 10px;
  margin-right: 3px;
  fill: none;
  stroke: #aaa;
}
.f {
  display: block;
  height: 18px;
  padding: 2px 0 0 2px;
  border: 1px solid #a0a0a0;
  border-right-color: #fff;
  border-bottom-color: #fff;
  font-size: 11px;
}
.f.num {
  width: 20px;
  height: 19px;
  margin-right: 3px;
  padding-left: 0;
  text-align: center;
}
.cores {
  width: 49px;
}
fieldset {
  min-width: 0;
  margin: 2px 0 0;
  padding: 6px 7px 2px 0;
  border: 1px solid #dcdcdc;
}
fieldset.second {
  margin-top: 6px;
}
legend {
  margin-left: 6px;
  padding: 0 2px;
}
.info,
.temps {
  display: grid;
  grid-auto-rows: 20px;
}
.info {
  grid-template-columns: 64px 70px 1fr 70px;
  column-gap: 5px;
}
.info > span,
.temps > span {
  padding-top: 3px;
  text-align: right;
}
.info .off {
  color: #a0a0a0;
}
.wide {
  grid-column: span 3;
}
.temps {
  grid-template-columns: 67px 1fr repeat(4, 41px);
  column-gap: 2px;
}
.temps > span {
  padding-right: 3px;
}
.temps b {
  padding-top: 3px;
  font-weight: 400;
  text-align: center;
}
.two {
  grid-column: span 2;
}
.f.mid {
  padding-left: 0;
  text-align: center;
}

/* stability test */
.sst {
  background: #f0f0f0;
}
.sst > .titlebar {
  padding-right: 4px;
}
.sst-top {
  display: flex;
  padding: 15px 16px 7px 15px;
}
.stress {
  flex: 0 0 182px;
}
.stress div {
  display: flex;
  gap: 8px;
  height: 20px;
}
.stress label,
.legend label {
  display: flex;
  align-items: center;
  gap: 3px;
  height: 20px;
}
input[type='checkbox'] {
  appearance: none;
  position: relative;
  width: 13px;
  height: 13px;
  margin: 0;
  border-radius: 3px;
  background: #005fb8;
}
input[type='checkbox']:checked::after {
  content: '';
  position: absolute;
  left: 3px;
  top: 3px;
  width: 7px;
  height: 4px;
  border: solid #fff;
  border-width: 0 0 1px 1px;
  transform: rotate(-45deg);
}
.log {
  flex: 0 1 442px;
  display: flex;
  height: 115px;
  margin-top: 1px;
  border: 1px solid #828790;
  background: #fff;
}
.log table {
  flex: 1;
}
.c-date {
  width: 151px;
}
.log th {
  height: 26px;
  padding-left: 7px;
}
.log th + th,
.log td + td {
  padding-left: 5px;
  border-left: 1px solid #ececec;
}
.log td {
  height: 19px;
  padding-left: 7px;
  border-bottom: 1px solid #ececec;
}
.log th:last-child,
.log td:last-child {
  border-right: 1px solid #ececec;
}
.log tr.sel td {
  background: #d9d9d9;
}
.log tr.rest td {
  height: 11px;
  border-bottom: 0;
}
.vscroll {
  flex: 0 0 17px;
  padding: 64px 0 0 7px;
  margin-left: 3px;
  background: #f0f0f0;
}
.vscroll i {
  display: block;
  width: 2px;
  height: 31px;
  background: #8a8a8a;
}
.tabs {
  display: flex;
  align-items: flex-end;
  height: 23px;
  padding-left: 16px;
}
.tabs button {
  height: 20px;
  padding: 0 6px;
  border: 1px solid #e3e3e3;
  border-bottom: 0;
  border-left: 0;
  background: #f3f3f3;
}
.tabs button.on {
  height: 23px;
  padding-bottom: 2px;
  border-left: 1px solid #e3e3e3;
  background: #f9f9f9;
}
.panel {
  display: grid;
  gap: 4px;
  margin: 0 13px 0 16px;
  padding: 3px 1px 2px 2px;
  border: 1px solid #e3e3e3;
  background: #f9f9f9;
}
.chart {
  background: #000;
}
.chart > svg {
  display: block;
  width: 100%;
  font-size: 11px;
}
.legend {
  display: flex;
  justify-content: center;
  gap: 12px;
  padding: 6px 12px 0 0;
}
.legend label {
  height: 18px;
}
.legend input[type='checkbox'] {
  border: 1px solid #444;
  border-radius: 0;
  background: #fff;
}
.legend input[type='checkbox']:checked::after {
  left: 2px;
  top: 2px;
  border-color: #333;
}
.legend.bar {
  gap: 6px;
  padding-right: 0;
}
.yellow {
  color: #ff0;
}
.blue {
  color: #99b4e6;
}
.lime {
  color: #00ff00;
}
.aqua {
  color: #00ffff;
}
.peach {
  color: #ffc880;
}
.white {
  color: #fff;
}
.grid path {
  stroke: #008000;
}
.now {
  stroke: #fff;
  stroke-dasharray: 4 3;
}
.l-lime,
.l-aqua,
.l-peach,
.l-yellow {
  fill: none;
  stroke: #00ff00;
}
.l-aqua {
  stroke: #00ffff;
}
.l-peach {
  stroke: #ffdcb4;
}
.l-yellow {
  stroke: #ff0;
}
.w {
  fill: #fff;
}
.t-lime {
  fill: #00ff00;
}
.t-aqua {
  fill: #00e0ff;
}
.t-peach {
  fill: #ffdcb4;
}
.t-yellow {
  fill: #ff0;
}
.status {
  display: flex;
  align-items: center;
  justify-content: center;
  gap: 12px;
  padding: 16px 0 13px 3px;
}
.status output {
  height: 24px;
  margin-right: 12px;
  background: #000;
  color: #00ff00;
  line-height: 24px;
  text-align: center;
}
.status output:last-child {
  margin-right: 0;
}
.short {
  width: 80px;
}
.long {
  width: 140px;
}
.actions {
  display: flex;
  gap: 26px;
  padding: 0 12px 13px 16px;
}
.actions div {
  display: flex;
  gap: 8px;
}
.actions .right {
  margin-left: auto;
}
.actions button {
  width: 73px;
  height: 21px;
  border: 1px solid #d0d0d0;
  border-bottom-color: #b8b8b8;
  border-radius: 4px;
  background: #fdfdfd;
}
.actions button:disabled {
  border-color: #e6e6e6;
  background: #f6f6f6;
  color: #9a9a9a;
}

/* taskbar */
.taskbar {
  display: flex;
  align-items: center;
  justify-content: flex-end;
  gap: 8px;
  height: 29px;
  padding-right: 7px;
  border-top: 4px solid #404040;
  background: #262626;
  color: #fff;
}
.taskbar span {
  width: 16px;
  text-align: center;
}
.taskbar .n1 {
  color: #ffd21e;
}
.taskbar .n2 {
  color: #46e01e;
}
.taskbar .lang {
  width: 26px;
}
.taskbar .time {
  width: 40px;
  margin-left: 4px;
}
</style>
